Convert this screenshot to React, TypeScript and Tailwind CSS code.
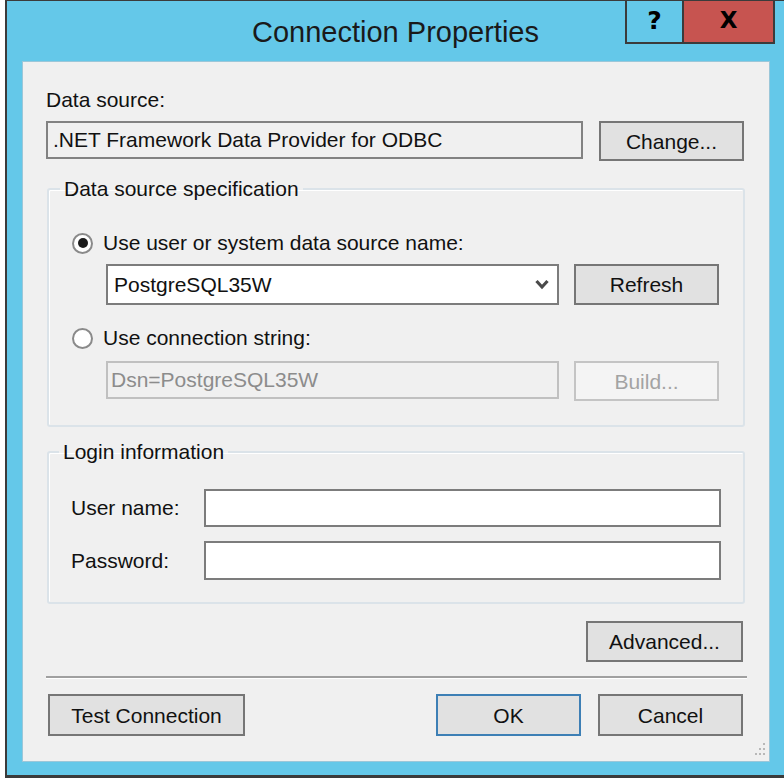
import React from 'react'

const font = "font-['Liberation_Sans',Arial,sans-serif]"

const Button = ({
  label,
  className = '',
  disabled = false,
  primary = false,
}: {
  label: string
  className?: string
  disabled?: boolean
  primary?: boolean
}) => (
  <button
    className={`flex items-center justify-center border-2 text-[21px] leading-none ${
      disabled
        ? 'border-[#c4c4c4] bg-[#f4f4f4] text-[#a3a3a3]'
        : primary
        ? 'border-[#3d7fb5] bg-[#e1e1e1] text-[#111]'
        : 'border-[#767676] bg-[#e1e1e1] text-[#111]'
    } ${className}`}
  >
    {label}
  </button>
)

const Radio = ({ checked, label }: { checked: boolean; label: string }) => (
  <div className="flex h-6 items-center">
    <span className="flex h-[21px] w-[21px] items-center justify-center rounded-full border-2 border-[#8a8a8a] bg-white">
      {checked && <span className="h-[10px] w-[10px] rounded-full bg-[#1b1b1b]" />}
    </span>
    <span className="ml-[10px] text-[21px] leading-6 text-[#111]">{label}</span>
  </div>
)

const GroupBox = ({
  title,
  className = '',
  children,
}: {
  title: string
  className?: string
  children: React.ReactNode
}) => (
  <fieldset
    className={`ml-px mr-0 rounded-[3px] border-2 border-[#dbe3e9] shadow-[inset_1px_1px_0_#ffffff] ${className}`}
  >
    <legend className="-ml-[12px] px-[4px] text-[21px] leading-6 text-[#111]">{title}</legend>
    {children}
  </fieldset>
)

const SizeGrip = () => (
  <svg width="12" height="16" viewBox="0 0 12 16" className="fill-[#b8b8b8]">
    <rect x="9" y="1" width="2" height="2" />
    <rect x="9" y="6" width="2" height="2" />
    <rect x="5" y="6" width="2" height="2" />
    <rect x="9" y="11" width="2" height="2" />
    <rect x="5" y="11" width="2" height="2" />
    <rect x="1" y="11" width="2" height="2" />
  </svg>
)

export default function App() {
  return (
    <div className={`h-[778px] w-[784px] overflow-hidden bg-white pl-[5px] ${font}`}>
      <div className="relative flex h-[778px] w-[779px] flex-col border-b-[3px] border-l-2 border-t border-[#3b3b3b] bg-[#64c8e9]">
        {/* title bar */}
        <div className="flex h-[60px] shrink-0 items-center justify-center pt-[4px] text-[29px] text-[#1a1a1a]">
          Connection Properties
        </div>
        <div className="absolute right-[9px] top-0 flex h-[43px]">
          <div className="flex w-[57px] items-center justify-center border-2 border-t-0 border-r-0 border-[#3b3b3b] bg-[#64c8e9] pb-[2px] font-['DejaVu_Sans',sans-serif] text-[25px] font-bold leading-none text-black">
            ?
          </div>
          <div className="flex w-[93px] items-center justify-center border-2 border-t-0 border-[#3b3b3b] bg-[#c75450] pb-[2px] font-['DejaVu_Sans',sans-serif] text-[23px] font-bold leading-none text-black">
            X
          </div>
        </div>

        {/* client area */}
        <div className="ml-[15px] flex h-[701px] w-[748px] flex-col border border-[#9bc7d9] bg-[#f0f0f0] pl-[23px] pr-[24px] text-[#111]">
          <div className="mt-[26px] text-[21px] leading-6">Data source:</div>
          <div className="mt-[9px] flex items-start justify-between">
            <div className="flex h-[38px] w-[537px] items-center border-2 border-[#828282] bg-[#f0f0f0] pl-[5px] text-[21px]">
              .NET Framework Data Provider for ODBC
            </div>
            <Button label="Change..." className="h-[40px] w-[145px] mr-[1px]" />
          </div>

          <GroupBox title="Data source specification" className="mt-[16px] pb-[24px] pl-[23px] pr-[24px] pt-[30px]">
            <Radio checked label="Use user or system data source name:" />
            <div className="ml-[34px] mt-[9px] flex gap-[15px]">
              <div className="flex h-[41px] w-[453px] items-center justify-between border-2 border-[#7c7c7c] bg-white pl-[6px] pr-[8px] text-[21px]">
                <span>PostgreSQL35W</span>
                <svg width="14" height="11" viewBox="0 0 14 11">
                  <path d="M1.5 2 L7 8 L12.5 2" stroke="#4a4a4a" strokeWidth="3.2" fill="none" />
                </svg>
              </div>
              <Button label="Refresh" className="h-[41px] w-[145px]" />
            </div>
            <div className="mt-[21px]">
              <Radio checked={false} label="Use connection string:" />
            </div>
            <div className="ml-[34px] mt-[11px] flex items-start gap-[15px]">
              <div className="flex h-[38px] w-[453px] items-center border-2 border-[#c0c0c0] bg-[#f0f0f0] pl-[3px] text-[21px] text-[#8c8c8c]">
                Dsn=PostgreSQL35W
              </div>
              <Button label="Build..." disabled className="h-[40px] w-[145px]" />
            </div>
          </GroupBox>

          <GroupBox title="Login information" className="mt-[13px] pb-[22px] pl-[22px] pr-[22px] pt-[25px]">
            <div className="flex items-center">
              <span className="w-[133px] text-[21px]">User name:</span>
              <div className="h-[38px] w-[517px] border-2 border-[#7c7c7c] bg-white" />
            </div>
            <div className="mt-[14px] flex items-center">
              <span className="w-[133px] text-[21px]">Password:</span>
              <div className="h-[39px] w-[517px] border-2 border-[#7c7c7c] bg-white" />
            </div>
          </GroupBox>

          <div className="mt-[17px] flex justify-end">
            <Button label="Advanced..." className="mr-[2px] h-[41px] w-[157px]" />
          </div>

          <div className="mt-[14px] h-[3px] w-[701px] border-b border-white bg-[#a0a0a0] bg-clip-padding" />

          <div className="mt-[15px] flex items-center">
            <Button label="Test Connection" className="ml-[2px] h-[42px] w-[197px]" />
            <div className="ml-auto flex gap-[17px]">
              <Button label="OK" primary className="h-[42px] w-[145px]" />
              <Button label="Cancel" className="mr-[2px] h-[42px] w-[145px]" />
            </div>
          </div>

          <div className="-mr-[21px] mt-auto mb-[3px] flex justify-end">
            <SizeGrip />
          </div>
        </div>
      </div>
    </div>
  )
}
